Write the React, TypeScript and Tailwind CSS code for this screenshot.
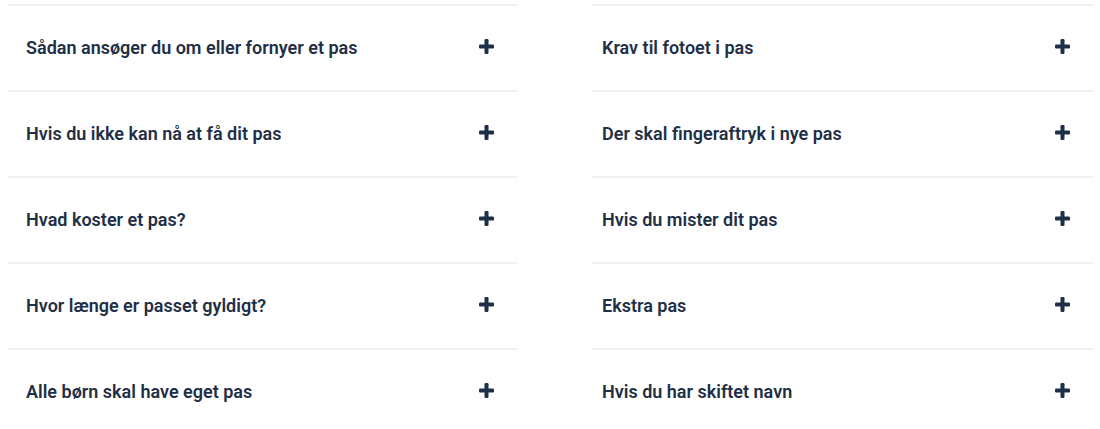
import React from "react";

const left = [
  "Sådan ansøger du om eller fornyer et pas",
  "Hvis du ikke kan nå at få dit pas",
  "Hvad koster et pas?",
  "Hvor længe er passet gyldigt?",
  "Alle børn skal have eget pas",
];

const right = [
  "Krav til fotoet i pas",
  "Der skal fingeraftryk i nye pas",
  "Hvis du mister dit pas",
  "Ekstra pas",
  "Hvis du har skiftet navn",
];

function Plus() {
  return (
    <svg width="15" height="15" viewBox="0 0 15 15" className="shrink-0 -mt-[2px]">
      <rect x="5.5" y="0" width="4" height="15" rx="1.2" fill="#1f2f46" />
      <rect x="0" y="5.5" width="15" height="4" rx="1.2" fill="#1f2f46" />
    </svg>
  );
}

function Item({ title, pad }: { title: string; pad: string }) {
  return (
    <button
      className={`flex items-center justify-between w-full h-[86px] border-t-2 border-[#f0f0f0] ${pad} pr-[23px] pb-[2px] text-left`}
    >
      <span className="text-[18px] font-semibold text-[#1f2f46]">{title}</span>
      <Plus />
    </button>
  );
}

export default function App() {
  return (
    <div
      className="w-[1100px] h-[429px] bg-white overflow-hidden pt-[4px]"
      style={{ fontFamily: "Roboto, 'Liberation Sans', sans-serif" }}
    >
      <div className="flex gap-[75px] pl-[8px]">
        {/* left column */}
        <div className="w-[509px] flex flex-col">
          {left.map((t) => (
            <Item key={t} title={t} pad="pl-[18px]" />
          ))}
        </div>

        {/* right column */}
        <div className="w-[501px] flex flex-col">
          {right.map((t) => (
            <Item key={t} title={t} pad="pl-[10px]" />
          ))}
        </div>
      </div>
    </div>
  );
}
